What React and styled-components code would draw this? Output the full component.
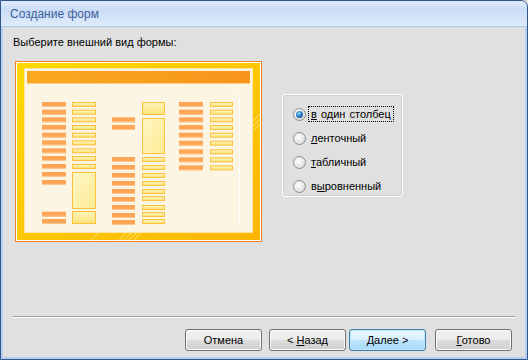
import React from 'react';
import styled, { createGlobalStyle } from 'styled-components';

const GlobalStyle = createGlobalStyle`
  html, body {
    margin: 0;
    padding: 0;
    background: #e0e0e0;
  }
  body {
    font-family: 'Liberation Sans', Arial, sans-serif;
  }
`;

const Window = styled.div`
  width: 528px;
  height: 360px;
  box-sizing: border-box;
  display: flex;
  flex-direction: column;
  padding: 0 2px 2px 2px;
  border: 1px solid #34558a;
  border-top-right-radius: 7px;
  background: #b6cff0;
  overflow: hidden;
`;

const TitleBar = styled.div`
  height: 25px;
  margin: 0 -2px;
  padding-left: 9px;
  display: flex;
  align-items: center;
  border-bottom: 1px solid #a8caee;
  background: linear-gradient(#e1ecfa 0%, #cadcf5 35%, #d3e3f8 65%, #e0ecfb 100%);
  color: #3c5f9c;
  font-size: 12px;
`;

const Content = styled.div`
  flex: 1;
  display: flex;
  flex-direction: column;
  padding: 8px 0 6px 0;
  background: #e0e0e0;
  font-size: 11px;
  color: #000;
`;

const Prompt = styled.div`
  margin-left: 10px;
  line-height: 14px;
`;

const MainRow = styled.div`
  display: flex;
  align-items: flex-start;
  margin-top: 12px;
  padding-left: 12px;
`;

const RadioGroup = styled.div`
  box-sizing: border-box;
  width: 121px;
  height: 103px;
  margin: 33px 0 0 20px;
  padding: 7px 0 0 10px;
  border: 1px solid #ffffff;
  border-radius: 3px;
  box-shadow: inset 0 0 0 1px #d2d2d2;
`;

const RadioRow = styled.div`
  height: 24px;
  display: flex;
  align-items: center;
`;

const RadioCircle = styled.span`
  box-sizing: border-box;
  width: 13px;
  height: 13px;
  border-radius: 50%;
  border: 1px solid #8c8e90;
  background: radial-gradient(circle at 40% 35%, #ffffff 0%, #e6e6e6 55%, #c9c9c9 100%);
  display: flex;
  align-items: center;
  justify-content: center;
  flex-shrink: 0;

  &::after {
    content: '';
    width: 7px;
    height: 7px;
    border-radius: 50%;
    display: ${(p) => (p.$checked ? 'block' : 'none')};
    background: radial-gradient(circle at 40% 35%, #9fdcff 0%, #2a7cc4 45%, #0c4a8c 100%);
  }
`;

const RadioLabel = styled.span`
  margin-left: 2px;
  padding: 0 2px;
  line-height: 14px;
  word-spacing: 1px;
  border: 1px dotted ${(p) => (p.$focused ? '#000' : 'transparent')};
  white-space: nowrap;
`;

const Footer = styled.div`
  margin-top: auto;
`;

const Separator = styled.div`
  margin: 0 10px;
  border-top: 1px solid #a0a0a0;
  border-bottom: 1px solid #ffffff;
`;

const ButtonRow = styled.div`
  display: flex;
  justify-content: flex-end;
  margin-top: 11px;
  padding-right: 13px;
`;

const Button = styled.button`
  box-sizing: border-box;
  width: 77px;
  height: 22px;
  margin: 0 0 0 ${(p) => p.$gap || 0}px;
  padding: 0;
  font-family: 'Liberation Sans', Arial, sans-serif;
  font-size: 11px;
  color: #000;
  border-radius: 3px;
  border: 1px solid ${(p) => (p.$default ? '#3c7fb1' : '#707070')};
  background: ${(p) =>
    p.$default
      ? 'linear-gradient(#eaf6fd 0%, #d9f0fc 50%, #bee6fd 50%, #a7d9f5 100%)'
      : 'linear-gradient(#f2f2f2 0%, #ebebeb 50%, #dddddd 50%, #cfcfcf 100%)'};
  box-shadow: inset 0 0 0 1px ${(p) => (p.$default ? '#c4e5f6' : '#fbfbfb')};
`;

const Key = styled.span`
  text-decoration: underline;
`;

// предпросмотр макета формы
const leftLabels = [41, 48.7, 56.3, 64, 71.7, 79.3, 87.3, 95, 103, 111, 119, 150.7, 158];
const leftBoxes = [41, 48.7, 56.3, 64, 71.7, 79.3, 87.3, 95, 103];
const midLabels = [56.3, 64, 96, 104, 112, 120, 128, 136, 144, 152, 159];
const midBoxes = [96, 104, 112, 120, 128, 135, 144, 151, 158];
const rightRows = [41, 48.7, 56.3, 64, 71.7, 79.7, 88.3, 96.3, 104.3];

const FieldLabel = ({ x, y, w }) => (
  <g>
    <rect x={x} y={y} width={w} height={5} fill="#ffa556" />
    <rect x={x} y={y + 4} width={w} height={1} fill="#ffc58c" />
  </g>
);

const FieldBox = ({ x, y, w, h = 5 }) => (
  <g>
    <rect x={x} y={y} width={w} height={h} fill="#fcc13d" />
    <rect x={x + 1} y={y + 1} width={w - 2} height={h - 2} fill="url(#boxFill)" />
  </g>
);

const PreviewArt = () => (
  <svg width="247" height="181" viewBox="0 0 247 181">
    <defs>
      <linearGradient id="frame" x1="0" y1="0" x2="1" y2="1">
        <stop offset="0" stopColor="#ffd900" />
        <stop offset="1" stopColor="#fbb600" />
      </linearGradient>
      <linearGradient id="header" x1="0" y1="0" x2="1" y2="0">
        <stop offset="0" stopColor="#f9a920" />
        <stop offset="1" stopColor="#f7951b" />
      </linearGradient>
      <linearGradient id="boxFill" x1="0" y1="0" x2="0" y2="1">
        <stop offset="0" stopColor="#fff4b8" />
        <stop offset="1" stopColor="#fee37e" />
      </linearGradient>
      <linearGradient id="tallFill" x1="0" y1="0" x2="1" y2="1">
        <stop offset="0" stopColor="#fff6c6" />
        <stop offset="1" stopColor="#fdeb92" />
      </linearGradient>
    </defs>
    <rect x="0.5" y="0.5" width="246" height="180" fill="#ffffff" stroke="#f4801f" />
    <rect x="2" y="2" width="243" height="177" fill="url(#frame)" />
    <g stroke="#ffe680" strokeWidth="1.5" opacity="0.6">
      <line x1="238" y1="60" x2="245" y2="53" />
      <line x1="238" y1="65" x2="245" y2="58" />
      <line x1="238" y1="70" x2="245" y2="63" />
      <line x1="104" y1="179" x2="112" y2="171" />
      <line x1="109" y1="179" x2="117" y2="171" />
      <line x1="114" y1="179" x2="122" y2="171" />
      <line x1="119" y1="179" x2="127" y2="171" />
      <line x1="76" y1="179" x2="84" y2="171" />
    </g>
    <rect x="9.5" y="7.5" width="228" height="164" fill="#fdf5e3" stroke="#fde6a8" />
    <rect x="12" y="10" width="223" height="12" fill="url(#header)" />
    <rect x="12" y="22" width="223" height="1" fill="#fbd189" />
    <rect x="224" y="32" width="1" height="131" fill="#ffffff" />

    {leftLabels.map((y) => (
      <FieldLabel key={`ll${y}`} x={27} y={y} w={24} />
    ))}
    {leftBoxes.map((y) => (
      <FieldBox key={`lb${y}`} x={57} y={y} w={24} />
    ))}
    <FieldBox x={57} y={111} w={24} h={37} />
    <rect x={58} y={112} width={22} height={35} fill="url(#tallFill)" />
    <FieldBox x={57} y={150} w={24} h={13} />

    {midLabels.map((y) => (
      <FieldLabel key={`ml${y}`} x={97} y={y} w={23} />
    ))}
    <FieldBox x={127} y={41} w={23} h={13} />
    <FieldBox x={127} y={57} w={23} h={36} />
    <rect x={128} y={58} width={21} height={34} fill="url(#tallFill)" />
    {midBoxes.map((y) => (
      <FieldBox key={`mb${y}`} x={127} y={y} w={23} />
    ))}

    {rightRows.map((y) => (
      <FieldLabel key={`rl${y}`} x={164} y={y} w={24} />
    ))}
    {rightRows.map((y) => (
      <FieldBox key={`rb${y}`} x={195} y={y} w={23} />
    ))}
  </svg>
);

const layouts = [
  { id: 'column', pre: '', key: 'в', rest: ' один столбец' },
  { id: 'tape', pre: '', key: 'л', rest: 'енточный' },
  { id: 'table', pre: '', key: 'т', rest: 'абличный' },
  { id: 'justified', pre: 'в', key: 'ы', rest: 'ровненный' },
];

const App = () => {
  const selected = 'column';

  return (
    <>
      <GlobalStyle />
      <Window>
        <TitleBar>Создание форм</TitleBar>
        <Content>
          <Prompt>Выберите внешний вид формы:</Prompt>
          <MainRow>
            <PreviewArt />
            <RadioGroup>
              {layouts.map((item) => (
                <RadioRow key={item.id}>
                  <RadioCircle $checked={item.id === selected} />
                  <RadioLabel $focused={item.id === selected}>
                    {item.pre}
                    <Key>{item.key}</Key>
                    {item.rest}
                  </RadioLabel>
                </RadioRow>
              ))}
            </RadioGroup>
          </MainRow>
          <Footer>
            <Separator />
            <ButtonRow>
              <Button>Отмена</Button>
              <Button $gap={7}>
                &lt; <Key>Н</Key>азад
              </Button>
              <Button $gap={3} $default>
                <Key>Д</Key>алее &gt;
              </Button>
              <Button $gap={9}>
                <Key>Г</Key>отово
              </Button>
            </ButtonRow>
          </Footer>
        </Content>
      </Window>
    </>
  );
};

export default App;
